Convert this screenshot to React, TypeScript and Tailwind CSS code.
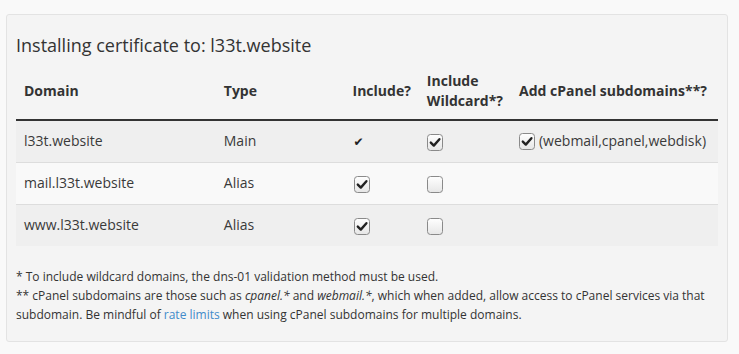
import React from "react";

function Box({ checked }: { checked: boolean }) {
  return (
    <svg width="16" height="17" viewBox="0 0 16 17" className="inline-block align-middle">
      <defs>
        <linearGradient id={checked ? "gc" : "gu"} x1="0" y1="0" x2="0" y2="1">
          <stop offset="0" stopColor="#ffffff" />
          <stop offset="1" stopColor="#e6e6e6" />
        </linearGradient>
      </defs>
      <rect x="0.5" y="0.5" width="15" height="16" rx="3" fill={`url(#${checked ? "gc" : "gu"})`} stroke="#8a8a8a" />
      {checked && (
        <path d="M3.8 8.6 L6.8 11.6 L12.4 5.2" fill="none" stroke="#222" strokeWidth="2.4" strokeLinecap="round" strokeLinejoin="round" />
      )}
    </svg>
  );
}

export default function App() {
  const rows = [
    { d: "l33t.website", t: "Main", main: true, wild: true, sub: true },
    { d: "mail.l33t.website", t: "Alias", main: false, inc: true, wild: false, sub: false },
    { d: "www.l33t.website", t: "Alias", main: false, inc: true, wild: false, sub: false },
  ];
  return (
    <div className="w-[739px] h-[354px] bg-[#f9f9f9] pt-[14px] pl-[6px] overflow-hidden" style={{ fontFamily: '"Open Sans", sans-serif' }}>
      <div className="w-[722px] h-[328px] bg-[#f4f4f4] border border-[#e3e3e3] rounded-[3px] px-[9px] text-[#333]">
        <h3 className="mt-[17px] text-[18px] leading-[26px] font-normal text-[#333]">Installing certificate to: l33t.website</h3>
        <table className="mt-[5px] w-[702px] border-collapse text-[14px] leading-[20px]">
          <thead>
            <tr>
              <th className="w-[200px] p-[8px] text-left align-middle font-bold border-b-2 border-[#333]">Domain</th>
              <th className="w-[129px] p-[8px] text-left align-middle font-bold border-b-2 border-[#333]">Type</th>
              <th className="w-[74px] p-[8px] text-left align-middle font-bold border-b-2 border-[#333]">Include?</th>
              <th className="w-[92px] p-[8px] text-left align-middle font-bold border-b-2 border-[#333]">Include<br />Wildcard*?</th>
              <th className="w-[207px] p-[8px] text-left align-middle font-bold border-b-2 border-[#333]">Add cPanel subdomains**?</th>
            </tr>
          </thead>
          <tbody className="text-[#3a3a3a]">
            {rows.map((r, i) => (
              <tr key={i} className={i % 2 === 0 ? "bg-[#efefef]" : "bg-[#f9f9f9]"}>
                <td className={`h-[42px] px-[8px] align-middle ${i > 0 ? "border-t border-[#dddddd]" : ""}`}>{r.d}</td>
                <td className={`px-[8px] align-middle ${i > 0 ? "border-t border-[#dddddd]" : ""}`}>{r.t}</td>
                <td className={`px-[9px] align-middle ${i > 0 ? "border-t border-[#dddddd]" : ""}`}>
                  {r.main ? (
                    <span className="text-[12px] text-[#222] leading-none" style={{ fontFamily: '"DejaVu Sans", sans-serif' }}>✔</span>
                  ) : (
                    <Box checked={!!r.inc} />
                  )}
                </td>
                <td className={`px-[8px] align-middle ${i > 0 ? "border-t border-[#dddddd]" : ""}`}>
                  <Box checked={r.wild} />
                </td>
                <td className={`px-[8px] align-middle ${i > 0 ? "border-t border-[#dddddd]" : ""}`}>
                  {r.sub && (
                    <span className="flex items-center gap-[4px] whitespace-nowrap">
                      <Box checked />
                      <span>(webmail,cpanel,webdisk)</span>
                    </span>
                  )}
                </td>
              </tr>
            ))}
          </tbody>
        </table>
        <div className="mt-[21px] text-[12px] leading-[19px] text-[#333]">
          <p>* To include wildcard domains, the dns-01 validation method must be used.</p>
          <p>
            ** cPanel subdomains are those such as <i>cpanel.*</i> and <i>webmail.*</i>, which when added, allow access to cPanel services via that subdomain. Be mindful of{" "}
            <a className="text-[#428bca]">rate limits</a> when using cPanel subdomains for multiple domains.
          </p>
        </div>
      </div>
    </div>
  );
}
